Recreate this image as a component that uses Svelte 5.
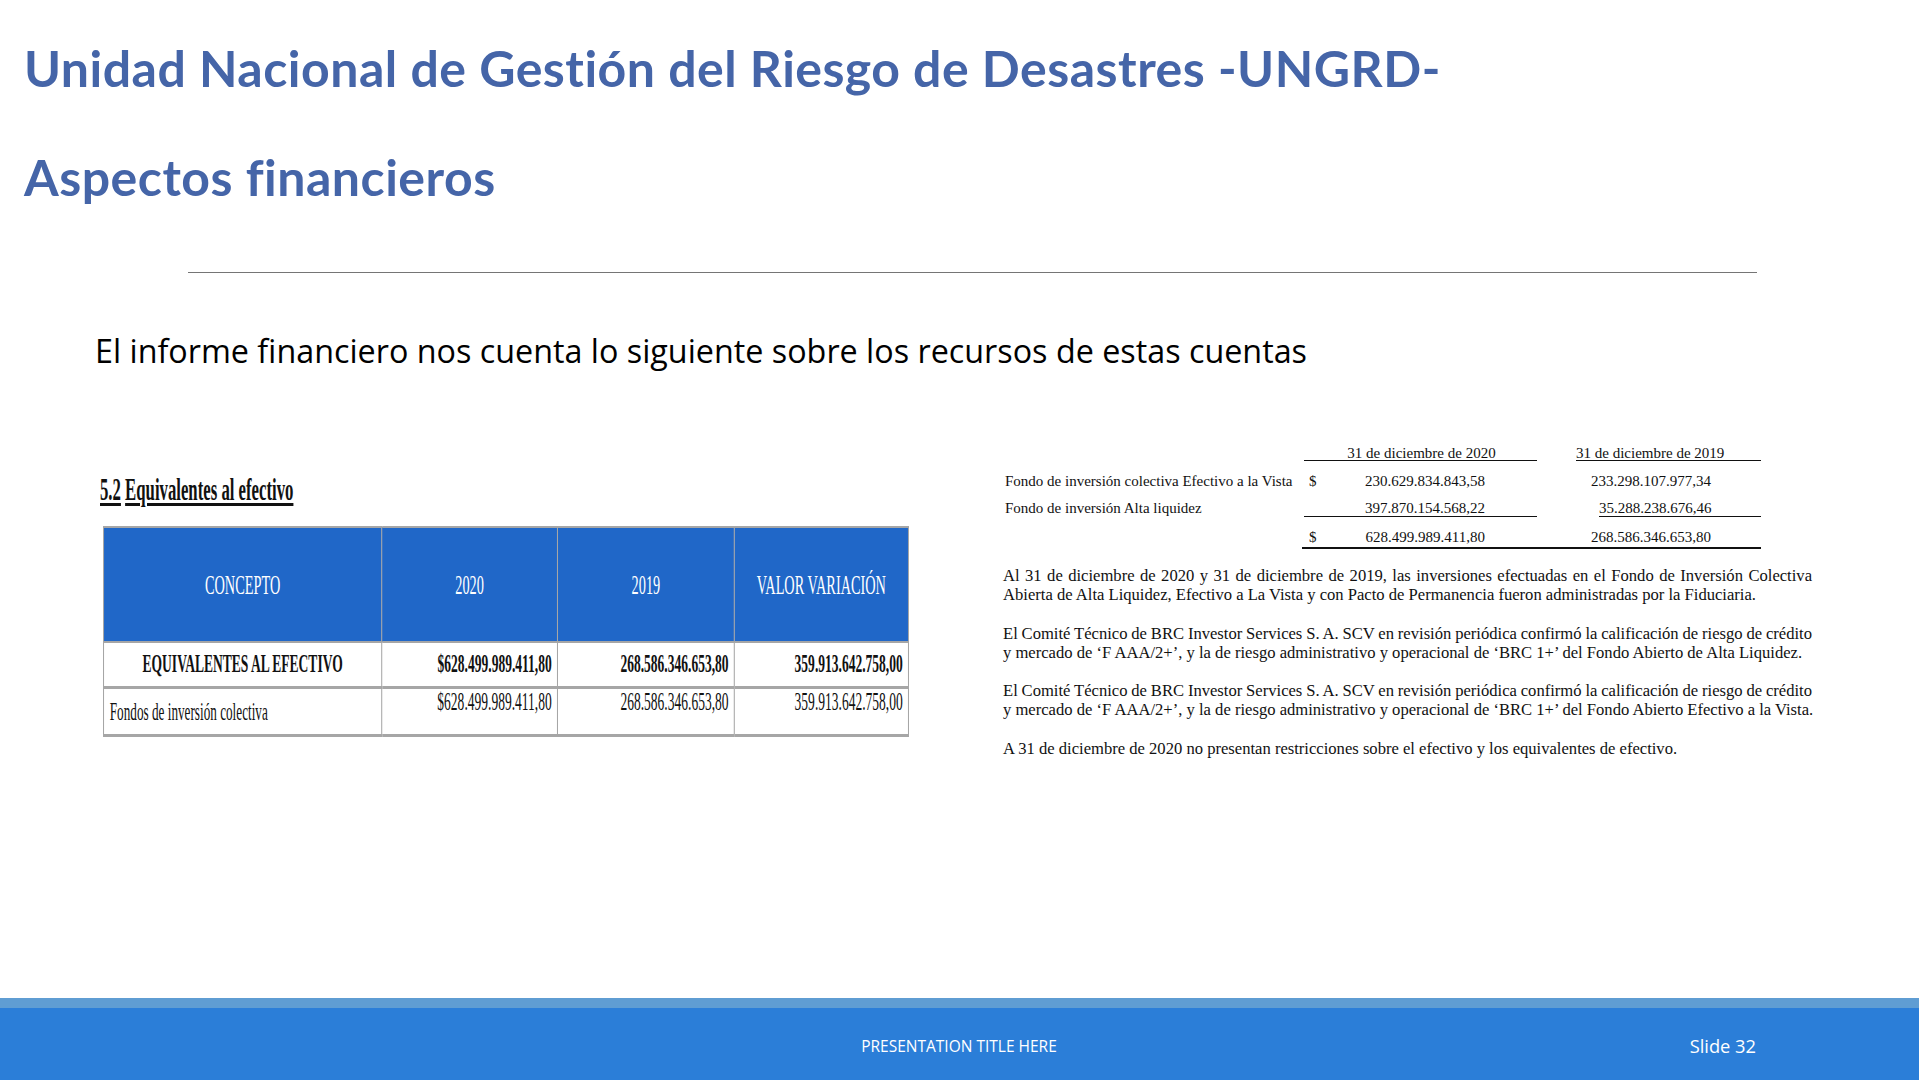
<script>
  const balances = [
    { label: 'Fondo de inversión colectiva Efectivo a la Vista', sign: '$', a: '230.629.834.843,58', b: '233.298.107.977,34' },
    { label: 'Fondo de inversión Alta liquidez', sign: '', a: '397.870.154.568,22', b: '35.288.238.676,46', ruled: true },
    { label: '', sign: '$', a: '628.499.989.411,80', b: '268.586.346.653,80', total: true }
  ];

  const notes = [
    [
      'Al 31 de diciembre de 2020 y 31 de diciembre de 2019, las inversiones efectuadas en el Fondo de Inversión Colectiva',
      'Abierta de Alta Liquidez, Efectivo a La Vista y con Pacto de Permanencia fueron administradas por la Fiduciaria.'
    ],
    [
      'El Comité Técnico de BRC Investor Services S. A. SCV en revisión periódica confirmó la calificación de riesgo de crédito',
      'y mercado de ‘F AAA/2+’, y la de riesgo administrativo y operacional de ‘BRC 1+’ del Fondo Abierto de Alta Liquidez.'
    ],
    [
      'El Comité Técnico de BRC Investor Services S. A. SCV en revisión periódica confirmó la calificación de riesgo de crédito',
      'y mercado de ‘F AAA/2+’, y la de riesgo administrativo y operacional de ‘BRC 1+’ del Fondo Abierto Efectivo a la Vista.'
    ],
    ['A 31 de diciembre de 2020 no presentan restricciones sobre el efectivo y los equivalentes de efectivo.']
  ];
</script>

<div class="slide">
  <header class="title">
    <h1>Unidad Nacional de Gestión del Riesgo de Desastres -UNGRD-</h1>
    <h1>Aspectos financieros</h1>
  </header>
  <div class="rule"></div>
  <p class="lead">El informe financiero nos cuenta lo siguiente sobre los recursos de estas cuentas</p>

  <main class="columns">
    <section class="left">
      <h2><span>5.2</span> <span>Equivalentes al efectivo</span></h2>
      <div class="squeeze">
        <table>
          <thead>
            <tr>
              <th class="c1">CONCEPTO</th>
              <th class="c2">2020</th>
              <th class="c3">2019</th>
              <th class="c4">VALOR VARIACIÓN</th>
            </tr>
          </thead>
          <tbody>
            <tr class="strong">
              <td class="center">EQUIVALENTES AL EFECTIVO</td>
              <td>$628.499.989.411,80</td>
              <td>268.586.346.653,80</td>
              <td>359.913.642.758,00</td>
            </tr>
            <tr class="plain">
              <td class="name">Fondos de inversión colectiva</td>
              <td>$628.499.989.411,80</td>
              <td>268.586.346.653,80</td>
              <td>359.913.642.758,00</td>
            </tr>
          </tbody>
        </table>
      </div>
    </section>

    <section class="right">
      <div class="balances">
        <div></div>
        <div class="head first">31 de diciembre de 2020</div>
        <div class="head second">31 de diciembre de 2019</div>
        {#each balances as row}
          <div class="label">{row.label}</div>
          <div class="amount first" class:ruled={row.ruled} class:total={row.total}>
            <span class="sign">{row.sign}</span><span>{row.a}</span>
          </div>
          <div class="amount second" class:ruled={row.ruled} class:total={row.total}>
            <span>{row.b}</span>
          </div>
        {/each}
      </div>

      {#each notes as lines}
        <p class="note">
          {#each lines as line, i}
            <span class:full={i === 0 && lines.length > 1}>{line}</span>
          {/each}
        </p>
      {/each}
    </section>
  </main>

  <footer>
    <div class="band"></div>
    <div class="bar">
      <span class="deck">PRESENTATION TITLE HERE</span>
      <span class="page">Slide 32</span>
    </div>
  </footer>
</div>

<style>
  :global(body) {
    margin: 0;
    background: #fff;
  }

  .slide {
    width: 1919px;
    height: 1080px;
    display: flex;
    flex-direction: column;
    overflow: hidden;
    font-family: "Lato", sans-serif;
  }

  .title {
    padding: 14px 0 1px 24px;
  }

  h1 {
    margin: 0;
    height: 108px;
    line-height: 108px;
    font-size: 50px;
    letter-spacing: 0.5px;
    font-weight: 700;
    color: #4565a8;
    white-space: nowrap;
  }

  h1 + h1 {
    padding-top: 1px;
    margin-bottom: -1px;
  }

  .rule {
    height: 1px;
    background: #757575;
    margin: 41px 162px 0 188px;
  }

  .lead {
    margin: 55px 0 1px 95px;
    font-family: "Open Sans", sans-serif;
    font-size: 32.3px;
    line-height: 44px;
    color: #000;
    white-space: nowrap;
  }

  .columns {
    display: flex;
    flex: 1;
    align-items: flex-start;
  }

  .left {
    width: 1003px;
    padding: 98px 0 0 100px;
    box-sizing: border-box;
  }

  h2 {
    margin: 0 0 17px;
    width: 360px;
    font: 700 31px/38px "Liberation Serif", serif;
    color: #111;
    transform: scaleX(0.54);
    transform-origin: left top;
    white-space: nowrap;
  }

  h2 span {
    text-decoration: underline;
    text-decoration-thickness: 3px;
    text-underline-offset: 3px;
  }

  .squeeze {
    width: 805px;
    height: 210px;
    margin-left: 3px;
  }

  table {
    width: 1548px;
    table-layout: fixed;
    border-collapse: collapse;
    transform: scaleX(0.52);
    transform-origin: left top;
    font-family: "Liberation Serif", serif;
    font-size: 26px;
    color: #111;
  }

  th, td {
    box-sizing: border-box;
    border: 2px solid #a6a6a6;
    padding: 0 10px;
    white-space: nowrap;
  }

  th {
    height: 115px;
    background: #2067c8;
    color: #fff;
    font-weight: 400;
    font-size: 27.5px;
    text-align: center;
  }

  .c1 { width: 535px; }
  .c2 { width: 338px; }
  .c3 { width: 340px; }
  .c4 { width: 335px; }

  td {
    text-align: right;
    line-height: 30px;
  }

  .strong td {
    height: 45px;
    font-weight: 700;
    border-bottom-width: 3px;
  }

  .plain td {
    height: 48px;
    vertical-align: top;
    padding-top: 0;
    line-height: 26px;
    border-bottom-width: 3px;
  }

  td.center {
    text-align: center;
  }

  td.name {
    text-align: left;
    vertical-align: bottom;
    padding: 0 0 10px 11px;
    font-size: 25.4px;
  }

  .right {
    width: 809px;
    margin-top: 72px;
    font-family: "Liberation Serif", serif;
    color: #111;
  }

  .balances {
    display: grid;
    grid-template-columns: 301px 233px 224px;
    grid-template-rows: 16px 34px 22px 32px;
    font-size: 15px;
    line-height: 18px;
    margin-bottom: 17px;
  }

  .head {
    box-sizing: border-box;
    border-bottom: 1px solid #111;
    line-height: 16px;
    white-space: nowrap;
  }

  .head.first {
    padding-left: 2px;
    text-align: center;
  }

  .head.second {
    margin-left: 39px;
    text-align: left;
  }

  .label {
    padding: 11px 0 0 2px;
    white-space: nowrap;
  }

  .label:nth-child(7) {
    padding-top: 4px;
  }

  .amount {
    box-sizing: border-box;
    display: flex;
    padding-top: 11px;
    white-space: nowrap;
  }

  .amount.first {
    padding-left: 5px;
    justify-content: space-between;
    padding-right: 52px;
  }

  .amount.second {
    margin-left: 39px;
    padding-left: 15px;
  }

  .amount.ruled {
    border-bottom: 1px solid #111;
    padding-top: 4px;
  }

  .amount.second.ruled {
    margin-left: 62px;
    padding-left: 0;
  }

  .amount.total {
    border-bottom: 2px solid #111;
    padding-top: 11px;
  }

  .amount.first.total {
    margin-left: -2px;
    padding-left: 7px;
  }

  .amount.second.total {
    margin-left: 0;
    padding-left: 54px;
  }

  .sign {
    display: inline-block;
    width: 10px;
  }

  .note {
    margin: 0 0 19px;
    font-size: 16.6px;
    line-height: 19.3px;
  }

  .note span {
    display: block;
    white-space: nowrap;
  }

  .note span.full {
    white-space: normal;
    word-spacing: -1.5px;
    text-align: justify;
    text-align-last: justify;
  }

  footer {
    flex: none;
  }

  .band {
    height: 10px;
    background: #5f9dd3;
  }

  .bar {
    height: 72px;
    box-sizing: border-box;
    padding: 2px 163px 0 162px;
    background: #2b7ed8;
    display: grid;
    grid-template-columns: 1fr auto 1fr;
    align-items: center;
    color: #fff;
    font-family: "Open Sans", sans-serif;
  }

  .deck {
    grid-column: 2;
    padding-top: 2px;
    font-size: 15.5px;
  }

  .page {
    grid-column: 3;
    justify-self: end;
    font-size: 18.3px;
  }
</style>
